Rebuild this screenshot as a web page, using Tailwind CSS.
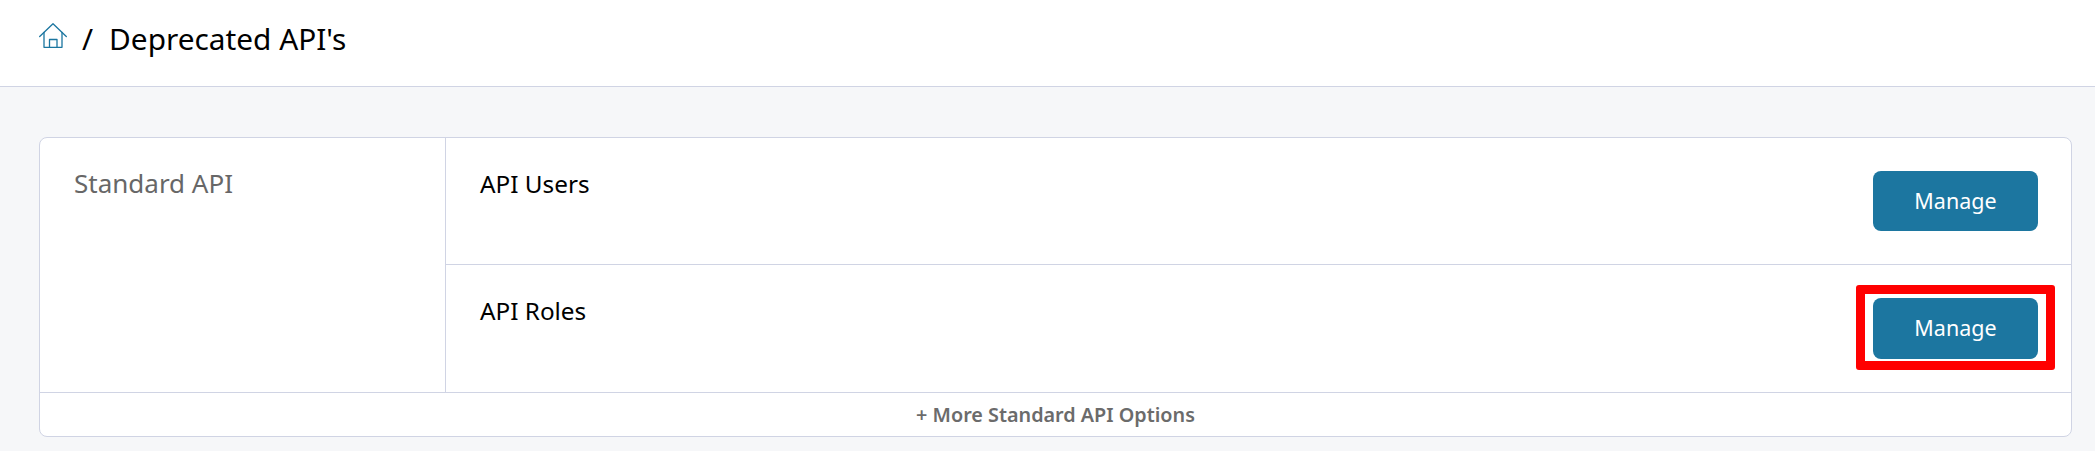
<!DOCTYPE html>
<html>
<head>
<meta charset="utf-8">
<script src="https://cdn.jsdelivr.net/npm/@tailwindcss/browser@4"></script>
</head>
<body class="bg-[#f6f7f9] font-['Noto_Sans',sans-serif] h-[451px] overflow-hidden">
<header class="h-[87px] bg-white border-b border-[#d0d4e4] flex items-center pl-[39px] pb-[8px]">
  <svg class="w-[28px] h-[25px] text-[#1b76a0] -mt-[7px]" viewBox="0 0 28 25" fill="none" stroke="currentColor" stroke-width="1.3" stroke-linecap="round" stroke-linejoin="round">
    <path d="M0.7 13.5 L14 0.8 L27.3 13.5"/>
    <path d="M5 9.5 V24.3 H23 V9.5"/>
    <path d="M10.5 24.3 V16.5 H18 V24.3"/>
  </svg>
  <span class="text-[29.8px] leading-[40px] text-black ml-[15px]">/</span>
  <span class="text-[29.8px] leading-[40px] text-black ml-[16px]">Deprecated API's</span>
</header>
<main class="pt-[50px] pl-[39px] pr-[23px]">
  <div class="bg-white border border-[#d0d4e4] rounded-[8px] h-[300px] flex flex-col">
    <div class="flex h-[255px] border-b border-[#d0d4e4]">
      <div class="w-[406px] border-r border-[#d0d4e4] pl-[34px] pt-[28px]">
        <span class="block text-[26px] leading-[35px] text-[#676767]">Standard API</span>
      </div>
      <div class="flex-1 flex flex-col">
        <div class="h-[127px] border-b border-[#d0d4e4] flex justify-between pl-[34px] pr-[33px] pt-[33px]">
          <span class="text-[24.3px] leading-[33px] -mt-[4px] text-black">API Users</span>
          <button class="w-[165px] h-[60px] bg-[#1c76a0] rounded-[8px] text-white text-[21.5px]">Manage</button>
        </div>
        <div class="flex-1 flex justify-between pl-[34px] pr-[33px] pt-[33px] relative">
          <span class="text-[24.3px] leading-[33px] -mt-[4px] text-black">API Roles</span>
          <button class="w-[165px] h-[61px] bg-[#1c76a0] rounded-[8px] text-white text-[21.5px]">Manage</button>
          <div class="absolute right-[16px] top-[20px] w-[199px] h-[85px] border-[9px] border-[#ff0000] rounded-[3px]"></div>
        </div>
      </div>
    </div>
    <div class="flex-1 flex items-center justify-center text-[19.8px] font-semibold text-[#6b6b6b]">+ More Standard API Options</div>
  </div>
</main>
</body>
</html>
